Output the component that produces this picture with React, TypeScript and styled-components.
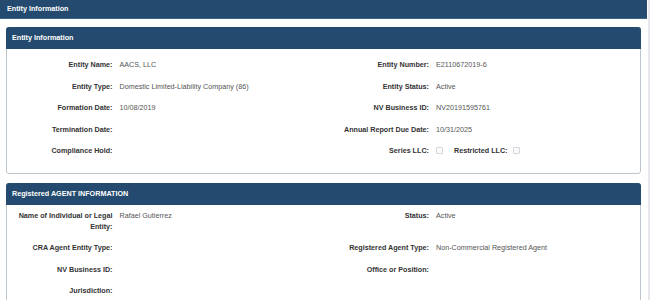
import React from 'react'
import styled, { createGlobalStyle } from 'styled-components'

const GlobalStyle = createGlobalStyle`
  body {
    margin: 0;
    background: #fff;
    font-family: "Liberation Sans", Arial, sans-serif;
  }
`

type Field = { label: string; value?: React.ReactNode }
type Row = [Field, Field?]

const entityRows: Row[] = [
  [{ label: 'Entity Name:', value: 'AACS, LLC' }, { label: 'Entity Number:', value: 'E2110672019-6' }],
  [{ label: 'Entity Type:', value: 'Domestic Limited-Liability Company (86)' }, { label: 'Entity Status:', value: 'Active' }],
  [{ label: 'Formation Date:', value: '10/08/2019' }, { label: 'NV Business ID:', value: 'NV20191595761' }],
  [{ label: 'Termination Date:' }, { label: 'Annual Report Due Date:', value: '10/31/2025' }],
]

const agentRows: Row[] = [
  [{ label: 'Name of Individual or Legal Entity:', value: 'Rafael Gutierrez' }, { label: 'Status:', value: 'Active' }],
  [{ label: 'CRA Agent Entity Type:' }, { label: 'Registered Agent Type:', value: 'Non-Commercial Registered Agent' }],
  [{ label: 'NV Business ID:' }, { label: 'Office or Position:' }],
  [{ label: 'Jurisdiction:' }],
]

const FieldCell = ({ field }: { field?: Field }) => (
  <FieldBox>
    {field && (
      <>
        <Label>{field.label}</Label>
        <Value>{field.value}</Value>
      </>
    )}
  </FieldBox>
)

const App = () => {
  return (
    <Page>
      <GlobalStyle />
      <Main>
        <TopBar>Entity Information</TopBar>
        <Content>
          <Panel>
            <PanelHeader>Entity Information</PanelHeader>
            <PanelBody top={10}>
              {entityRows.map((r, i) => (
                <RowLine key={i}>
                  <FieldCell field={r[0]} />
                  <FieldCell field={r[1]} />
                </RowLine>
              ))}
              <RowLine>
                <FieldCell field={{ label: 'Compliance Hold:' }} />
                <FieldBox>
                  <Label>Series LLC:</Label>
                  <Value>
                    <Check />
                    <InlineLabel>Restricted LLC:</InlineLabel>
                    <Check />
                  </Value>
                </FieldBox>
              </RowLine>
            </PanelBody>
          </Panel>
          <Panel>
            <PanelHeader>Registered AGENT INFORMATION</PanelHeader>
            <PanelBody top={5}>
              {agentRows.map((r, i) => (
                <RowLine key={i}>
                  <FieldCell field={r[0]} />
                  <FieldCell field={r[1]} />
                </RowLine>
              ))}
            </PanelBody>
          </Panel>
        </Content>
      </Main>
      <Strip />
    </Page>
  )
}

export default App

const Page = styled.div`
  display: flex;
  width: 650px;
  height: 300px;
  overflow: hidden;
`
const Main = styled.div`
  width: 647px;
  display: flex;
  flex-direction: column;
`
const Strip = styled.div`
  width: 2px;
  margin-left: 1px;
  background: #e4e8ed;
`
const TopBar = styled.div`
  height: 19px;
  line-height: 18px;
  padding-left: 7px;
  background: #244b6f;
  color: #fff;
  font-weight: bold;
  font-size: 7.2px;
  border-bottom: 1px solid #3f6487;
  box-sizing: border-box;
`
const Content = styled.div`
  padding: 8px 6px 0 6px;
  display: flex;
  flex-direction: column;
  gap: 9px;
`
const Panel = styled.div`
  border: 1px solid #bcc5ce;
  border-radius: 3px;
  background: #fff;
`
const PanelHeader = styled.div`
  height: 22px;
  line-height: 22px;
  padding-left: 6px;
  background: #244b6f;
  color: #fff;
  font-weight: bold;
  font-size: 7.2px;
  margin: -1px -1px 0 -1px;
  border-radius: 3px 3px 0 0;
`
const PanelBody = styled.div<{ top: number }>`
  padding: ${p => p.top}px 0 6px 0;
`
const RowLine = styled.div`
  display: grid;
  grid-template-columns: 1fr 1fr;
  margin-bottom: 10.5px;
`
const FieldBox = styled.div`
  display: grid;
  grid-template-columns: 1fr 2fr;
  font-size: 7.2px;
  line-height: 11px;
`
const Label = styled.div`
  text-align: right;
  font-weight: bold;
  color: #333;
  padding-left: 4px;
`
const Value = styled.div`
  color: #555;
  padding-left: 7px;
  display: flex;
  align-items: center;
  align-self: start;
  height: 11px;
`
const InlineLabel = styled.span`
  font-weight: bold;
  color: #333;
  margin: 0 5px 0 11px;
`
const Check = styled.span`
  display: inline-block;
  width: 5px;
  height: 5px;
  border: 1px solid #d4d8dc;
  border-radius: 1px;
  background: #fafafa;
`
